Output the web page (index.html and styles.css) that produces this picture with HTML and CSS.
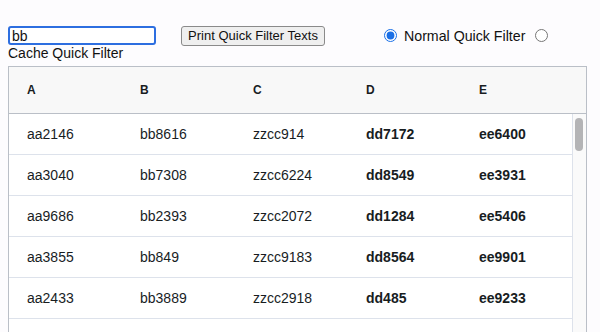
FILE: index.html
```html
<!DOCTYPE html>
<html lang="en">
  <head>
    <meta charset="UTF-8" />
    <meta name="viewport" content="width=device-width, initial-scale=1.0" />
    <title>Quick Filter</title>
    <link rel="stylesheet" href="styles.css">
  </head>
  <body>
    <div class="controls">
      <input type="text" id="quickFilter" class="filter-input" value="bb">
      <button id="printTexts" class="print-btn">Print Quick Filter Texts</button>
      <input type="radio" name="filterMode" id="normalFilter" class="radio" checked>
      <label for="normalFilter" class="radio-label">Normal Quick Filter</label>
      <input type="radio" name="filterMode" id="cacheFilter" class="radio radio-last">
    </div>
    <label for="cacheFilter" class="cache-label">Cache Quick Filter</label>

    <div class="grid">
      <div class="grid-header">
        <div class="cell head">A</div>
        <div class="cell head">B</div>
        <div class="cell head">C</div>
        <div class="cell head">D</div>
        <div class="cell head">E</div>
      </div>
      <div class="grid-body">
        <div class="rows">
          <div class="row">
            <div class="cell">aa2146</div>
            <div class="cell">bb8616</div>
            <div class="cell">zzcc914</div>
            <div class="cell strong">dd7172</div>
            <div class="cell strong">ee6400</div>
          </div>
          <div class="row">
            <div class="cell">aa3040</div>
            <div class="cell">bb7308</div>
            <div class="cell">zzcc6224</div>
            <div class="cell strong">dd8549</div>
            <div class="cell strong">ee3931</div>
          </div>
          <div class="row">
            <div class="cell">aa9686</div>
            <div class="cell">bb2393</div>
            <div class="cell">zzcc2072</div>
            <div class="cell strong">dd1284</div>
            <div class="cell strong">ee5406</div>
          </div>
          <div class="row">
            <div class="cell">aa3855</div>
            <div class="cell">bb849</div>
            <div class="cell">zzcc9183</div>
            <div class="cell strong">dd8564</div>
            <div class="cell strong">ee9901</div>
          </div>
          <div class="row">
            <div class="cell">aa2433</div>
            <div class="cell">bb3889</div>
            <div class="cell">zzcc2918</div>
            <div class="cell strong">dd485</div>
            <div class="cell strong">ee9233</div>
          </div>
          <div class="row"></div>
        </div>
        <div class="vscroll">
          <div class="thumb"></div>
        </div>
      </div>
    </div>
  </body>
</html>
```

FILE: styles.css
```css
html, body {
  overflow: hidden;
}
body {
  margin: 0;
  padding: 26px 8px 0;
  background: #fdfcfe;
  font-family: "Liberation Sans", Arial, sans-serif;
  font-size: 14px;
  color: #111;
}
.controls {
  display: flex;
  align-items: center;
  height: 19px;
}
.filter-input {
  width: 148px;
  height: 19px;
  box-sizing: border-box;
  margin: 0;
  padding: 0 2px;
  border: 2px solid #2d6ee0;
  border-radius: 3px;
  font-family: "Liberation Sans", Arial, sans-serif;
  font-size: 14px;
  color: #111;
  background: #fff;
  outline: none;
}
.print-btn {
  width: 144px;
  height: 20px;
  margin: 0 0 0 25px;
  padding: 0;
  box-sizing: border-box;
  border: 1px solid #8a8a8a;
  border-radius: 3px;
  background: #efefef;
  font-family: "Liberation Sans", Arial, sans-serif;
  font-size: 13px;
  color: #111;
}
.radio {
  width: 13px;
  height: 13px;
  margin: 0 0 0 59px;
  accent-color: #1a6fe6;
}
.radio-label {
  margin-left: 7px;
  line-height: 16px;
  font-size: 14.2px;
}
.radio-last {
  margin-left: 10px;
}
.cache-label {
  display: block;
  line-height: 16px;
}
.grid {
  margin-top: 5px;
  width: 579px;
  height: 300px;
  box-sizing: border-box;
  border: 1px solid #babfc7;
  background: #fff;
  color: #181d1f;
}
.grid-header {
  display: flex;
  height: 47px;
  box-sizing: border-box;
  border-bottom: 1px solid #babfc7;
  background: #f8f8f8;
}
.cell {
  flex: 0 0 113px;
  box-sizing: border-box;
  padding-left: 18px;
  display: flex;
  align-items: center;
  white-space: nowrap;
}
.head {
  font-size: 12px;
  font-weight: bold;
}
.strong {
  font-weight: bold;
}
.grid-body {
  display: flex;
  height: 260px;
}
.rows {
  flex: 1;
  overflow: hidden;
}
.row {
  display: flex;
  height: 41px;
  box-sizing: border-box;
  border-bottom: 1px solid #dde2eb;
}
.vscroll {
  width: 14px;
  border-left: 1px solid #dde2eb;
  background: #fafafa;
  padding: 4px 0 0 2px;
  box-sizing: border-box;
}
.thumb {
  width: 8px;
  height: 33px;
  border-radius: 4px;
  background: #b4b4b6;
}
```
